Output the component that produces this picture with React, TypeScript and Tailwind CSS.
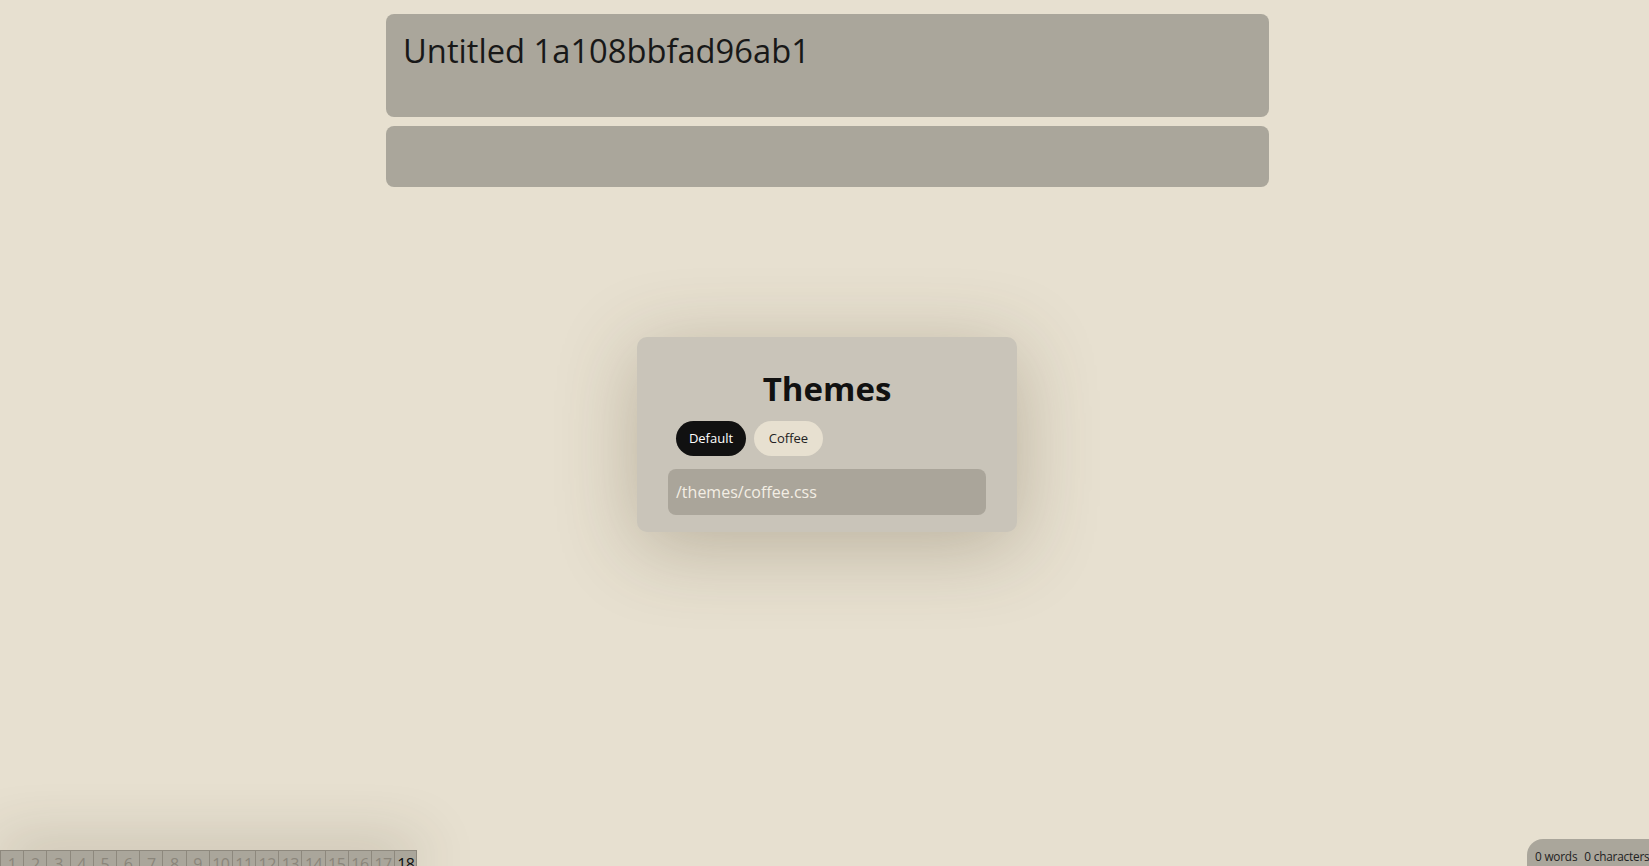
import React from "react";

export default function App() {
  const tabs = Array.from({ length: 18 }, (_, i) => i + 1);
  return (
    <div
      className="relative min-h-[866px] w-full overflow-hidden bg-[#e7e0d0] text-[#111]"
      style={{ fontFamily: '"Open Sans", "Noto Sans", sans-serif' }}
    >
      <div className="flex flex-col gap-[9px] pt-[14px] pl-[6px]">
        <div className="mx-auto h-[103px] w-[883px] rounded-[8px] bg-[#aaa69b] px-[17px] pt-[14px]">
          <div className="text-[32.7px] leading-[46px] text-[#181818]">Untitled 1a108bbfad96ab1</div>
        </div>
        <div className="mx-auto h-[61px] w-[883px] rounded-[8px] bg-[#aaa69b]" />
      </div>

      {/* Themes modal */}
      <div className="absolute left-[637px] top-[337px] flex w-[380px] flex-col rounded-[10px] bg-[#c9c4b9] px-[31px] pb-[17px] pt-[29px] shadow-[0_14px_80px_rgba(80,65,40,0.3)]">
        <h2 className="text-center text-[33px] font-bold leading-[46px] text-[#111]">Themes</h2>
        <div className="mt-[9px] flex gap-[8px] pl-[8px]">
          <button className="h-[35px] w-[70px] rounded-full bg-[#111] text-[13px] text-white">Default</button>
          <button className="h-[35px] w-[69px] rounded-full bg-[#e7e0d0] text-[13px] text-[#222]">Coffee</button>
        </div>
        <div className="mt-[13px] flex h-[46px] items-center rounded-[8px] bg-[#aaa59a] pl-[8px] text-[16px] text-[#f3eee4]">
          /themes/coffee.css
        </div>
      </div>

      {/* bottom-left page tabs */}
      <div className="absolute bottom-0 left-0 flex shadow-[0_0_60px_rgba(60,50,30,0.45)]">
        {tabs.map((t) => (
          <div
            key={t}
            className={
              t === 18
                ? "h-[16px] w-[23.2px] overflow-hidden border border-b-0 border-[#8d887d] bg-[#aaa69b] pt-[1px] text-center text-[16px] leading-[24px] text-[#111] tracking-[-0.5px]"
                : "h-[16px] w-[23.2px] overflow-hidden border border-b-0 border-r-0 border-[#8d887d] bg-[#aaa69b] pt-[1px] text-center text-[16px] leading-[24px] text-[#8a857a] tracking-[-0.5px]"
            }
          >
            {t}
          </div>
        ))}
      </div>

      {/* bottom-right word count */}
      <div className="absolute bottom-0 right-0 flex h-[27px] w-[122px] items-center gap-[7px] overflow-hidden whitespace-nowrap rounded-tl-[16px] bg-[#aaa69b] pl-[8px] pt-[8px] text-[11.8px] tracking-[-0.2px] text-[#222]">
        <span>0 words</span>
        <span>0 characters</span>
      </div>
    </div>
  );
}
